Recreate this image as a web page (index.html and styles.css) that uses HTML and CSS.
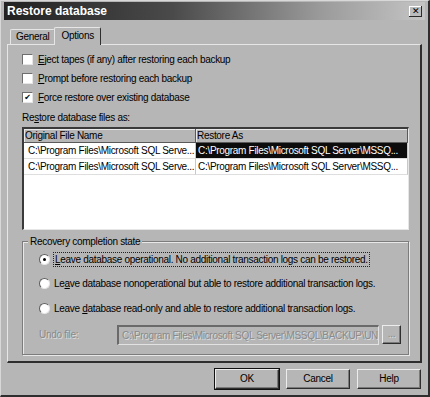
FILE: index.html
```html
<!DOCTYPE html>
<html lang="en">
<head>
    <meta charset="UTF-8">
    <title>Restore database</title>
    <link rel="stylesheet" href="styles.css">
</head>
<body>
    <div class="window">
        <div class="titlebar">
            <span class="title">Restore database</span>
            <span class="close">&#x2715;</span>
        </div>

        <div class="tabs">
            <div class="tab">General</div>
            <div class="tab active">Options</div>
        </div>

        <div class="panel">
            <div class="check-row"><span class="checkbox"></span><span><u>E</u>ject tapes (if any) after restoring each backup</span></div>
            <div class="check-row"><span class="checkbox"></span><span><u>P</u>rompt before restoring each backup</span></div>
            <div class="check-row"><span class="checkbox checked">&#x2714;</span><span><u>F</u>orce restore over existing database</span></div>

            <div class="files-label">Re<u>s</u>tore database files as:</div>
            <div class="files">
                <div class="files-row header">
                    <div class="cell col1">Original File Name</div>
                    <div class="cell col2">Restore As</div>
                </div>
                <div class="files-row">
                    <div class="cell col1">C:\Program Files\Microsoft SQL Serve...</div>
                    <div class="cell col2 selected">C:\Program Files\Microsoft SQL Server\MSSQ...</div>
                </div>
                <div class="files-row">
                    <div class="cell col1">C:\Program Files\Microsoft SQL Serve...</div>
                    <div class="cell col2">C:\Program Files\Microsoft SQL Server\MSSQ...</div>
                </div>
            </div>

            <div class="group">
                <div class="group-label">Recovery completion state</div>
                <div class="radio-row"><span class="radio on"></span><span class="focus"><u>L</u>eave database operational. No additional transaction logs can be restored.</span></div>
                <div class="radio-row"><span class="radio"></span><span>Le<u>a</u>ve database nonoperational but able to restore additional transaction logs.</span></div>
                <div class="radio-row"><span class="radio"></span><span>Leave <u>d</u>atabase read-only and able to restore additional transaction logs.</span></div>
                <div class="undo-row">
                    <span class="undo-label disabled">Undo file:</span>
                    <span class="undo-field disabled">C:\Program Files\Microsoft SQL Server\MSSQL\BACKUP\UN</span>
                    <span class="btn small disabled">...</span>
                </div>
            </div>
        </div>

        <div class="buttons">
            <div class="btn default">OK</div>
            <div class="btn">Cancel</div>
            <div class="btn">Help</div>
        </div>
    </div>
</body>
</html>
```

FILE: styles.css
```css
body { margin: 0; font-family: "Liberation Sans", Arial, sans-serif; font-size: 10px; letter-spacing: -0.3px; color: #000; background: #3a3a3a; }
u { text-decoration: underline; text-underline-offset: 1px; }

.window { width: 430px; height: 397px; box-sizing: border-box; background: #b6b6b6; padding: 1px 3px 2px 3px;
    border-top: 1px solid #d8d8d8; border-left: 1px solid #d8d8d8; border-right: 2px solid #2e2e2e; border-bottom: 2px solid #2e2e2e; }

.titlebar { height: 18px; display: flex; align-items: center; justify-content: space-between; padding: 0 3px 0 3px;
    background: linear-gradient(to right, #222 0%, #4a4a4a 40%, #9a9a9a 75%, #c4c4c4 100%); }
.title { color: #fff; font-weight: bold; font-size: 12px; letter-spacing: 0; }
.close { width: 13px; height: 11px; background: #bcbcbc; font-family: "DejaVu Sans", sans-serif; font-size: 9px; font-weight: bold; line-height: 11px; text-align: center;
    box-shadow: inset -1px -1px #2a2a2a, inset 1px 1px #fff; }

.tabs { display: flex; align-items: flex-end; height: 18px; margin-top: 6px; padding-left: 6px; }
.tab { height: 14px; padding: 0 5px; line-height: 14px; background: #b6b6b6; border-top: 1px solid #e6e6e6; border-left: 1px solid #e6e6e6; border-right: 1px solid #2e2e2e; border-radius: 2px 2px 0 0; }
.tab.active { height: 17px; line-height: 16px; position: relative; top: 1px; margin-left: -1px; padding: 0 6px; }

.panel { height: 319px; box-sizing: border-box; margin: 0 3px 0 3px; padding: 5px 11px 0 14px;
    border-top: 1px solid #e6e6e6; border-left: 1px solid #e6e6e6; border-right: 2px solid #2e2e2e; border-bottom: 2px solid #2e2e2e; }

.check-row { display: flex; align-items: center; height: 19px; }
.checkbox { width: 11px; height: 11px; margin-right: 5px; background: #fff; box-sizing: border-box;
    border-top: 1px solid #6e6e6e; border-left: 1px solid #6e6e6e; border-right: 1px solid #e6e6e6; border-bottom: 1px solid #e6e6e6;
    font-family: "DejaVu Sans", sans-serif; font-size: 8px; line-height: 9px; text-align: center; font-weight: bold; }

.files-label { margin-top: 5px; height: 13px; }
.files { height: 103px; margin-top: 2px; background: #fff; box-sizing: border-box;
    border-top: 2px solid #3a3a3a; border-left: 2px solid #3a3a3a; border-right: 1px solid #e6e6e6; border-bottom: 1px solid #e6e6e6; }
.files-row { display: flex; height: 16px; }
.files-row.header { height: 14px; background: #b6b6b6; }
.cell { white-space: nowrap; overflow: hidden; padding-left: 4px; line-height: 16px; box-sizing: border-box; border-right: 1px solid #c8c8c8; border-bottom: 1px solid #dedede; }
.header .cell { line-height: 13px; padding-left: 1px; border-right: 1px solid #5a5a5a; border-bottom: 1px solid #5a5a5a; box-shadow: inset 1px 1px #e8e8e8; }
.col1 { width: 172px; }
.col2 { flex: 1; padding-left: 2px; }
.selected { background: #0c0c0c; color: #fff; }

.group { position: relative; height: 114px; box-sizing: border-box; margin-top: 11px; padding: 5px 0 0 16px;
    border: 1px solid #7c7c7c; box-shadow: 1px 1px #e8e8e8, inset 1px 1px #e8e8e8; }
.group-label { position: absolute; top: -7px; left: 5px; padding: 0 2px; background: #b6b6b6; line-height: 13px; }
.radio-row { display: flex; align-items: center; height: 24.5px; }
.radio { width: 11px; height: 11px; margin-right: 4px; border-radius: 50%; background: #fff; box-sizing: border-box; position: relative;
    border-top: 1px solid #5e5e5e; border-left: 1px solid #5e5e5e; border-right: 1px solid #e6e6e6; border-bottom: 1px solid #e6e6e6; }
.radio.on::after { content: ""; position: absolute; left: 3px; top: 3px; width: 3px; height: 3px; border-radius: 50%; background: #000; }
.focus { outline: 1px dotted #222; outline-offset: 0; padding: 1px 1px; }
.undo-row { display: flex; align-items: center; margin-top: 4px; }
.undo-label { width: 78px; }
.disabled { color: #8a8a8a; text-shadow: 1px 1px #dcdcdc; }
.undo-field { width: 262px; height: 20px; box-sizing: border-box; padding-left: 3px; line-height: 17px; white-space: nowrap; overflow: hidden;
    border-top: 2px solid #6a6a6a; border-left: 2px solid #6a6a6a; border-right: 1px solid #e2e2e2; border-bottom: 1px solid #e2e2e2; }

.btn { height: 20px; width: 64px; box-sizing: border-box; text-align: center; line-height: 18px; background: #b6b6b6;
    border-top: 1px solid #ececec; border-left: 1px solid #ececec; border-right: 1px solid #2e2e2e; border-bottom: 1px solid #2e2e2e;
    box-shadow: inset -1px -1px #7a7a7a; }
.btn.small { width: 19px; height: 19px; margin-left: 3px; line-height: 15px; }
.btn.default { outline: 1px solid #111; }

.buttons { display: flex; justify-content: flex-end; gap: 7px; margin-top: 6px; padding-right: 4px; }
```
